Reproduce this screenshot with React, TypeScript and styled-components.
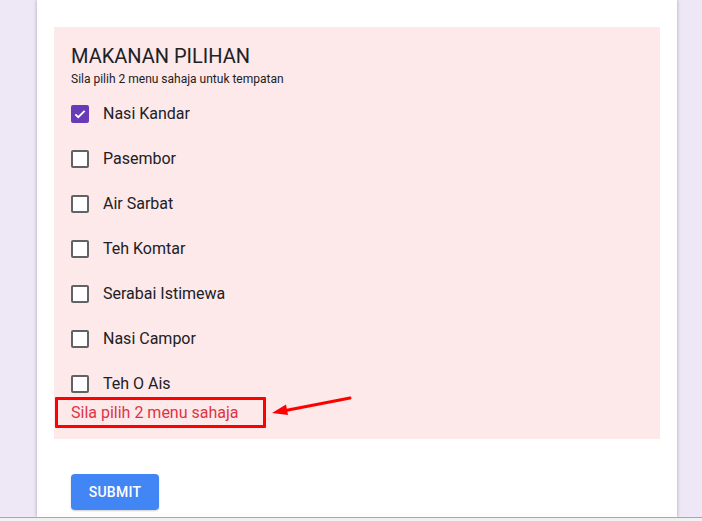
import React from 'react'
import styled, { createGlobalStyle } from 'styled-components'

const GlobalStyle = createGlobalStyle`
  html, body {
    margin: 0;
    padding: 0;
    background: #ede7f6;
    font-family: Roboto, 'Liberation Sans', Arial, sans-serif;
  }
`

const Page = styled.div`
  height: 521px;
  display: flex;
  flex-direction: column;
  overflow: hidden;
`

const Stage = styled.div`
  flex: 1;
  display: flex;
  padding-left: 37px;
`

const Card = styled.div`
  width: 640px;
  background: #fff;
  box-shadow: -1px 0 3px rgba(0, 0, 0, 0.15), 1px 0 3px rgba(0, 0, 0, 0.15);
  padding: 27px 17px 0;
  box-sizing: border-box;
`

const Question = styled.div`
  position: relative;
  background: #fde8ea;
  padding: 17px 17px 16px;
`

const Title = styled.div`
  font-size: 20px;
  line-height: 24px;
  color: #202124;
  margin-bottom: 3px;
`

const Help = styled.div`
  font-size: 12px;
  line-height: 16px;
  color: #202124;
  margin-bottom: 4px;
`

const Option = styled.label`
  height: 45px;
  display: flex;
  align-items: center;
  gap: 14px;
  font-size: 16px;
  color: #202124;
`

const Box = styled.span<{ $checked?: boolean }>`
  width: 18px;
  height: 18px;
  box-sizing: border-box;
  border-radius: 2px;
  border: 2px solid ${(p) => (p.$checked ? '#673ab7' : '#5f6368')};
  background: ${(p) => (p.$checked ? '#673ab7' : '#fff')};
  display: flex;
  align-items: center;
  justify-content: center;
`

const Error = styled.div`
  margin-top: -3px;
  font-size: 16px;
  line-height: 20px;
  color: #dc3545;
`

const Highlight = styled.div`
  position: absolute;
  left: 1px;
  top: 370px;
  width: 211px;
  height: 31px;
  border: 3px solid #ff0000;
  box-sizing: border-box;
  border-radius: 1px;
`

const Arrow = styled.svg`
  position: absolute;
  left: 215px;
  top: 368px;
`

const Actions = styled.div`
  padding: 35px 17px 0;
`

const Submit = styled.button`
  width: 88px;
  height: 36px;
  border: none;
  border-radius: 4px;
  background: #4285f4;
  color: #fff;
  font-family: Roboto, 'Liberation Sans', Arial, sans-serif;
  font-size: 14px;
  font-weight: 500;
  letter-spacing: 0.25px;
  box-shadow: 0 1px 2px rgba(0, 0, 0, 0.2);
`

const Footer = styled.div`
  height: 4px;
  border-top: 1px solid #a8a8a8;
  background: #f1f1f1;
  box-sizing: border-box;
`

const options = [
  { label: 'Nasi Kandar', checked: true },
  { label: 'Pasembor' },
  { label: 'Air Sarbat' },
  { label: 'Teh Komtar' },
  { label: 'Serabai Istimewa' },
  { label: 'Nasi Campor' },
  { label: 'Teh O Ais' },
]

export default function App() {
  return (
    <Page>
      <GlobalStyle />
      <Stage>
        <Card>
          <Question>
            <Title>MAKANAN PILIHAN</Title>
            <Help>Sila pilih 2 menu sahaja untuk tempatan</Help>
            {options.map((o) => (
              <Option key={o.label}>
                <Box $checked={o.checked}>
                  {o.checked && (
                    <svg width="14" height="14" viewBox="0 0 24 24">
                      <path d="M4 12.5l5 5L20 6.5" fill="none" stroke="#fff" strokeWidth="3.2" />
                    </svg>
                  )}
                </Box>
                {o.label}
              </Option>
            ))}
            <Error>Sila pilih 2 menu sahaja</Error>
            <Highlight />
            <Arrow width="84" height="22" viewBox="0 0 84 22">
              <line x1="81" y1="3" x2="14" y2="16" stroke="#ff0000" strokeWidth="3" strokeLinecap="round" />
              <polygon points="3,18 17,9.5 19,20" fill="#ff0000" />
            </Arrow>
          </Question>
          <Actions>
            <Submit>SUBMIT</Submit>
          </Actions>
        </Card>
      </Stage>
      <Footer />
    </Page>
  )
}
